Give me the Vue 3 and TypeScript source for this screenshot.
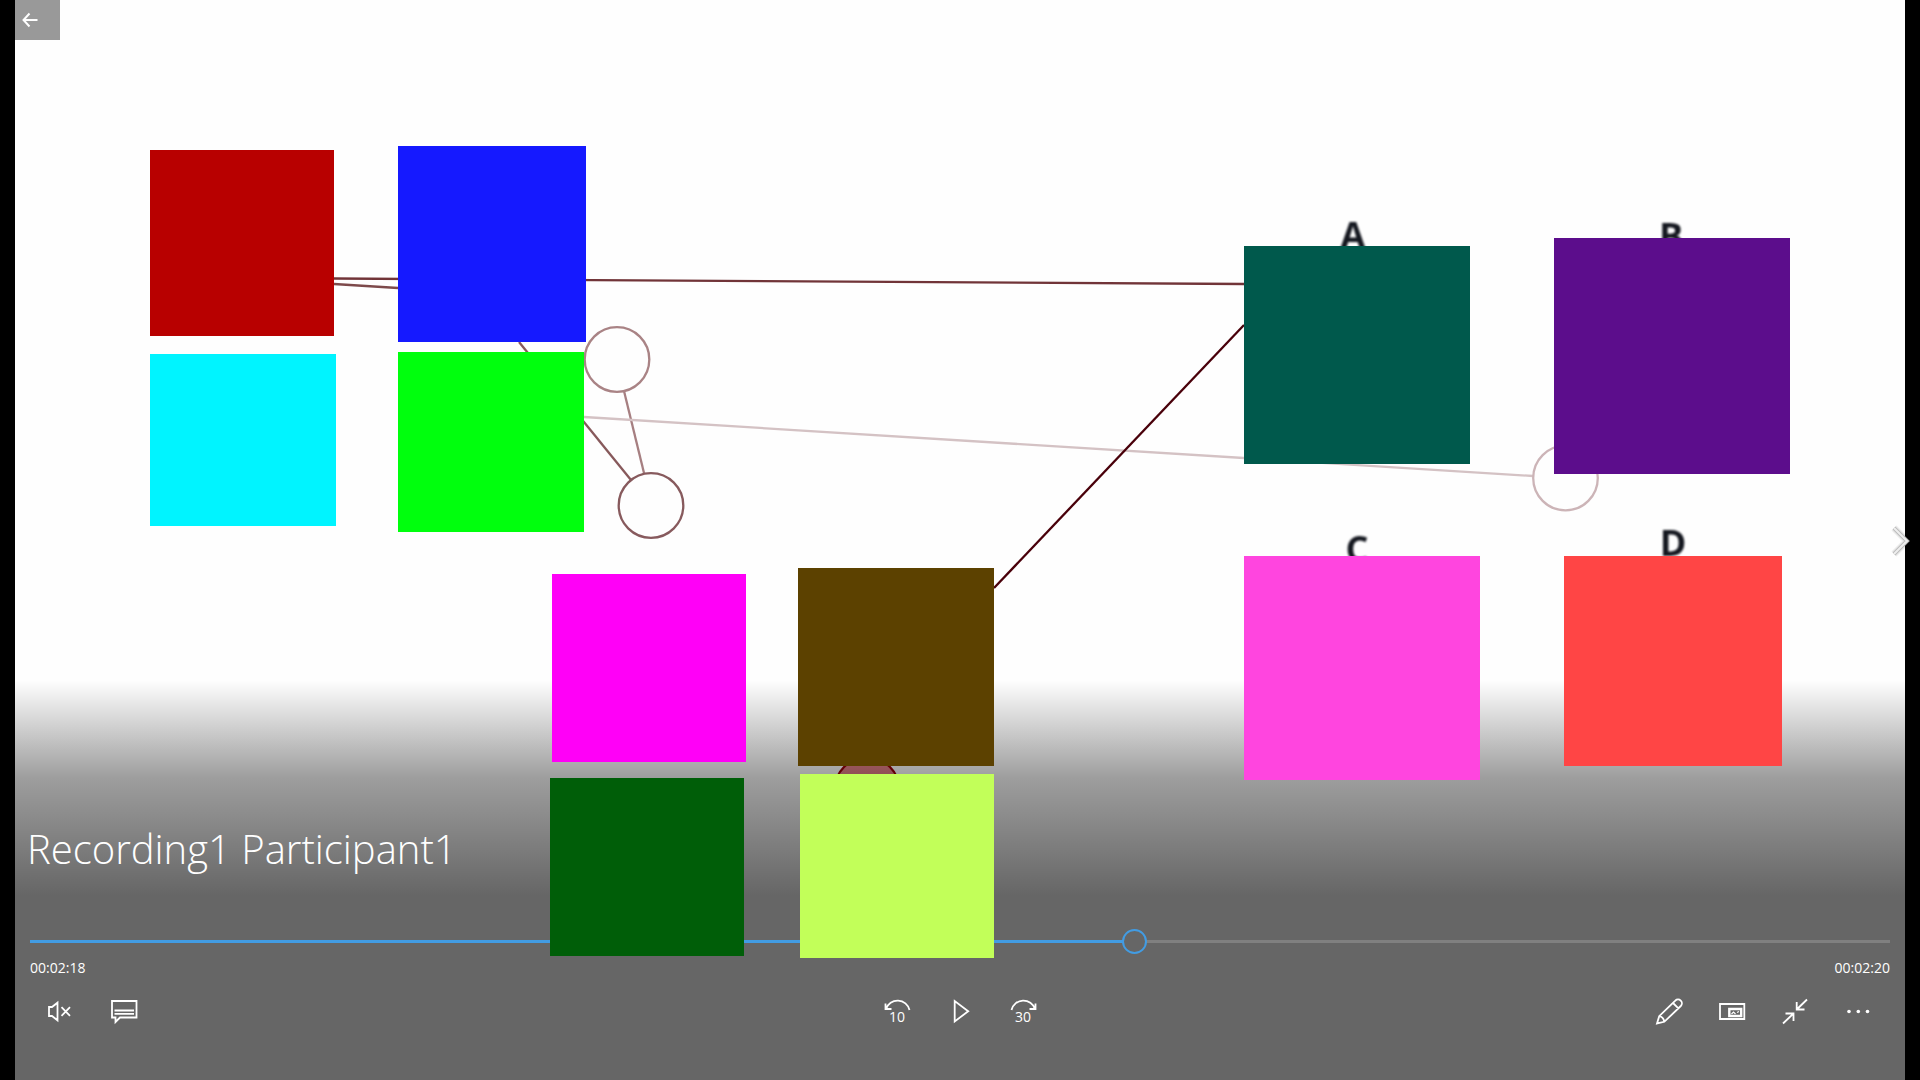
<script setup lang="ts">
import { computed, ref } from 'vue'

interface Tile {
  x: number
  y: number
  w: number
  h: number
  color: string
}

const tiles: Tile[] = [
  { x: 150, y: 150, w: 184, h: 186, color: '#b80000' },
  { x: 398, y: 146, w: 188, h: 196, color: '#1519ff' },
  { x: 150, y: 354, w: 186, h: 172, color: '#00f4ff' },
  { x: 398, y: 352, w: 186, h: 180, color: '#00ff0d' },
  { x: 1244, y: 246, w: 226, h: 218, color: '#00594c' },
  { x: 1554, y: 238, w: 236, h: 236, color: '#5c0d8c' },
  { x: 1244, y: 556, w: 236, h: 224, color: '#ff45df' },
  { x: 1564, y: 556, w: 218, h: 210, color: '#ff4545' },
  { x: 552, y: 574, w: 194, h: 188, color: '#ff00f7' },
  { x: 798, y: 568, w: 196, h: 198, color: '#5c4100' },
  { x: 550, y: 778, w: 194, h: 178, color: '#005e08' },
  { x: 800, y: 774, w: 194, h: 184, color: '#c2ff59' },
]

const options = [
  { label: 'A', x: 1353, y: 248 },
  { label: 'B', x: 1671, y: 249 },
  { label: 'C', x: 1357, y: 562 },
  { label: 'D', x: 1673, y: 556 },
]

const position = ref(595)
const played = computed(() => `${position.value / 10}%`)
</script>

<template>
  <main class="player">
    <svg class="layer" viewBox="15 0 1890 1080" preserveAspectRatio="none" aria-hidden="true">
      <g class="gaze">
        <path d="M334 278.500L1244 284" stroke="#713438" />
        <path d="M334 284L398 288" stroke="#7d4a4b" />
        <path d="M519 342L631 480" stroke="#87595b" />
        <path d="M624 391L644 473" stroke="#a67f81" />
        <path d="M584 417L1533 476" stroke="#d4c2c4" />
        <path d="M1244 325L994 588" stroke="#49000a" />
        <circle cx="617" cy="359.500" r="32.300" stroke="#a98385" />
        <circle cx="651" cy="505.500" r="32.300" stroke="#875a5d" />
        <circle cx="1565.500" cy="478" r="32.300" stroke="#ccb4b7" />
        <circle cx="867" cy="790" r="32.500" stroke="#980008" fill="#e37f87" />
      </g>
      <g class="options">
        <text v-for="o in options" :key="o.label" :x="o.x" :y="o.y">{{ o.label }}</text>
      </g>
    </svg>

    <div class="scrim"></div>

    <button class="back" type="button" aria-label="Back">
      <svg width="16" height="16" viewBox="0 0 16 16"><path d="M15.500 8H1.500M7.500 1.500L1.500 8L7.500 14.500" /></svg>
    </button>

    <button class="next" type="button" aria-label="Next">
      <svg width="24" height="36" viewBox="0 0 24 36">
        <path class="halo" d="M5 5L18 18L5 31" />
        <path class="rim" d="M5 5L18 18L5 31" />
        <path class="core" d="M5 5L18 18L5 31" />
      </svg>
    </button>

    <section class="transport">
      <h1>Recording1 Participant1</h1>
      <input
        v-model.number="position"
        class="seek"
        type="range"
        min="0"
        max="1000"
        aria-label="Seek"
        :style="{ '--played': played }"
      />
      <div class="times">
        <span>00:02:18</span>
        <span>00:02:20</span>
      </div>
      <div class="controls">
        <div class="group">
          <button type="button" aria-label="Unmute">
            <svg viewBox="0 0 27 27"><path d="M1 9H4L9.500 4.700V22.300L4 18H1ZM13.500 9.200L22 17.800M22 9.200L13.500 17.800" /></svg>
          </button>
          <button type="button" aria-label="Subtitles">
            <svg viewBox="0 0 27 27"><path d="M1 3H25.500V19.500H9L4.500 24V19.500H1ZM3.500 12.500H23M3.500 15.800H23" /></svg>
          </button>
        </div>
        <div class="group">
          <button type="button" aria-label="Skip back 10 seconds">
            <svg viewBox="0 0 27 27">
              <path d="M2 11A12.200 12.200 0 0 1 25.500 12M1.500 5.500V11H7.500" />
              <text x="13" y="24">10</text>
            </svg>
          </button>
          <button type="button" aria-label="Play">
            <svg viewBox="0 0 27 27"><path d="M7.700 3V23.500L21.200 13.200Z" /></svg>
          </button>
          <button type="button" aria-label="Skip forward 30 seconds">
            <svg viewBox="0 0 27 27">
              <path d="M25 11A12.200 12.200 0 0 0 1.500 12M25.500 5.500V11H19.500" />
              <text x="13" y="24">30</text>
            </svg>
          </button>
        </div>
        <div class="group end">
          <button type="button" aria-label="Draw">
            <svg viewBox="0 0 27 27"><path d="M1 25.500L3.200 18.200L19.300 2.600A3.600 3.600 0 0 1 24.800 8L8.300 23.800ZM3.200 18.200Q7.500 18.800 8.300 23.800M17 5L22.400 10.400" /></svg>
          </button>
          <button type="button" aria-label="Mini view">
            <svg viewBox="0 0 27 27">
              <path d="M1 6H25.300V21H1Z" />
              <path class="heavy" d="M10.300 11H22.200V18H10.300Z" />
              <path class="fine" d="M12.500 16L14.500 14L16.500 16M18 14.500L20 13.500" />
            </svg>
          </button>
          <button type="button" aria-label="Exit full screen">
            <svg viewBox="0 0 27 27"><path d="M25 1.500L14.700 11.500M14.700 4V11.500H22.500M1 25.500L11.500 15.500M3.500 15.500H11.500V23" /></svg>
          </button>
          <button type="button" aria-label="More">
            <svg class="dots" viewBox="0 0 27 27">
              <circle cx="4" cy="13.500" r="1.800" />
              <circle cx="13.300" cy="13.500" r="1.800" />
              <circle cx="22.500" cy="13.500" r="1.800" />
            </svg>
          </button>
        </div>
      </div>
    </section>

    <svg class="layer cover" viewBox="15 0 1890 1080" preserveAspectRatio="none" aria-hidden="true">
      <rect
        v-for="(t, i) in tiles"
        :key="i"
        :x="t.x"
        :y="t.y"
        :width="t.w"
        :height="t.h"
        :fill="t.color"
      />
    </svg>
  </main>
</template>

<style>
body {
  margin: 0;
  background: #000;
}
</style>

<style scoped>
.player {
  position: relative;
  display: flex;
  flex-direction: column;
  justify-content: flex-end;
  min-height: 100vh;
  margin: 0 15px;
  background: #fefefe;
  color: #fff;
  font-family: "Open Sans", "Noto Sans", sans-serif;
}

.layer {
  position: absolute;
  inset: 0;
  width: 100%;
  height: 100%;
}

.cover {
  pointer-events: none;
}

.gaze {
  fill: none;
  stroke-width: 2.3;
}

.options {
  fill: #14171f;
  font-size: 36px;
  font-weight: 700;
  text-anchor: middle;
  filter: blur(1px);
}

.scrim {
  position: absolute;
  right: 0;
  bottom: 0;
  left: 0;
  height: 400px;
  background: linear-gradient(transparent, rgba(0, 0, 0, 0.38) 98px, rgba(0, 0, 0, 0.6) 216px);
}

button {
  display: flex;
  align-items: center;
  justify-content: center;
  padding: 0;
  border: 0;
  background: none;
  color: inherit;
  font: inherit;
}

button svg {
  fill: none;
  stroke: #fff;
  stroke-width: 2;
}

.back {
  position: absolute;
  top: 0;
  left: 0;
  justify-content: flex-start;
  width: 45px;
  height: 40px;
  padding-left: 7px;
  background: #999;
}

.next {
  position: absolute;
  top: 50%;
  right: -8px;
  z-index: 1;
  width: 24px;
  height: 36px;
  margin-top: -17px;
}

.next .halo {
  stroke: rgba(0, 0, 0, 0.08);
  stroke-width: 7;
}

.next .rim {
  stroke: #bbb;
  stroke-width: 4;
}

.next .core {
  stroke: #eee;
}

.transport {
  position: relative;
  padding: 0 15px 43px;
}

h1 {
  margin: 0 0 50px -3px;
  font-size: 40px;
  font-weight: 300;
  line-height: 60px;
  white-space: nowrap;
}

.seek {
  display: block;
  width: 100%;
  height: 25px;
  margin: 0;
  appearance: none;
  background: none;
}

.seek::-webkit-slider-runnable-track {
  height: 3px;
  background: linear-gradient(to right, #429ce3 var(--played), #808080 var(--played));
}

.seek::-webkit-slider-thumb {
  width: 25px;
  height: 25px;
  margin-top: -11px;
  box-sizing: border-box;
  appearance: none;
  border: 2px solid #429ce3;
  border-radius: 50%;
  background: #666;
}

.times {
  display: flex;
  justify-content: space-between;
  margin-top: 4px;
  font-size: 14px;
  line-height: 20px;
}

.controls {
  display: grid;
  grid-template-columns: 1fr auto 1fr;
  margin-top: 8px;
}

.group {
  display: flex;
}

.end {
  justify-content: flex-end;
}

.group button {
  width: 63px;
  height: 51px;
}

.group svg {
  width: 27px;
  height: 27px;
  overflow: visible;
  stroke-width: 1.8;
}

.group svg .heavy {
  stroke-width: 2.4;
}

.group svg .fine {
  stroke-width: 1.2;
}

.group text,
.group .dots {
  fill: #fff;
  stroke: none;
}

.group text {
  font-size: 14px;
  text-anchor: middle;
}
</style>
